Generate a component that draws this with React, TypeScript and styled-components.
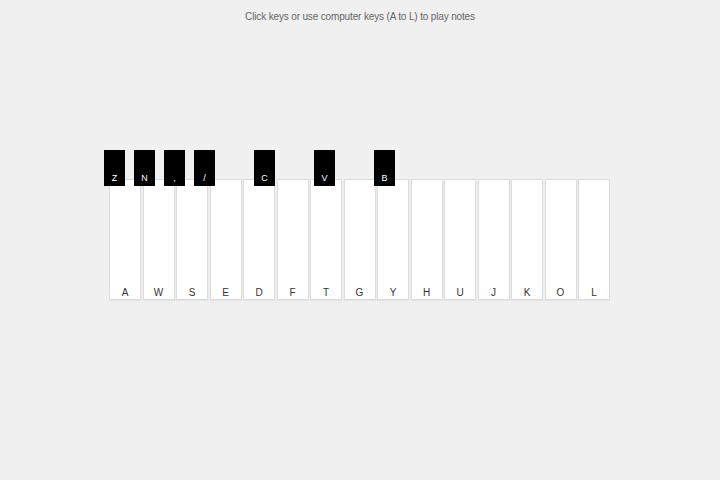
import styled, { createGlobalStyle } from 'styled-components';

const GlobalStyle = createGlobalStyle`
  html, body {
    margin: 0;
    padding: 0;
    background: #f0f0f0;
    font-family: 'Liberation Sans', Arial, sans-serif;
  }
`;

const Page = styled.div`
  display: flex;
  flex-flow: column;
  align-items: center;
  height: 480px;
`;

const Hint = styled.p`
  margin: 10px 0 0;
  font-size: 10px;
  letter-spacing: -0.15px;
  color: #666;
  line-height: 13px;
`;

const Keyboard = styled.div`
  position: relative;
  display: flex;
  gap: 1.5px;
  margin-top: 156px;
  margin-right: 1px;
`;

const WhiteKey = styled.div`
  box-sizing: border-box;
  width: 32px;
  height: 121px;
  background: #fff;
  border: 1px solid #dcdcdc;
  box-shadow: 0 1px 1px rgba(0, 0, 0, 0.05);
  display: flex;
  align-items: flex-end;
  justify-content: center;
  padding-bottom: 1px;
  font-size: 10px;
  color: #333;
  cursor: pointer;
`;

const BlackKey = styled.div<{ $slot: number }>`
  position: absolute;
  top: -29px;
  left: ${(p) => p.$slot * 30 - 5}px;
  width: 21px;
  height: 36px;
  background: #000;
  color: #fff;
  display: flex;
  align-items: flex-end;
  justify-content: center;
  padding-bottom: 3px;
  box-sizing: border-box;
  font-size: 9px;
  z-index: 1;
  cursor: pointer;
`;

const whiteKeys = ['A', 'W', 'S', 'E', 'D', 'F', 'T', 'G', 'Y', 'H', 'U', 'J', 'K', 'O', 'L'];
const blackKeys = [
  { label: 'Z', slot: 0 },
  { label: 'N', slot: 1 },
  { label: ',', slot: 2 },
  { label: '/', slot: 3 },
  { label: 'C', slot: 5 },
  { label: 'V', slot: 7 },
  { label: 'B', slot: 9 },
];

export default function App() {
  return (
    <Page>
      <GlobalStyle />
      <Hint>Click keys or use computer keys (A to L) to play notes</Hint>
      <Keyboard>
        {whiteKeys.map((k) => (
          <WhiteKey key={k}>{k}</WhiteKey>
        ))}
        {blackKeys.map((b) => (
          <BlackKey key={b.label} $slot={b.slot}>
            {b.label}
          </BlackKey>
        ))}
      </Keyboard>
    </Page>
  );
}
